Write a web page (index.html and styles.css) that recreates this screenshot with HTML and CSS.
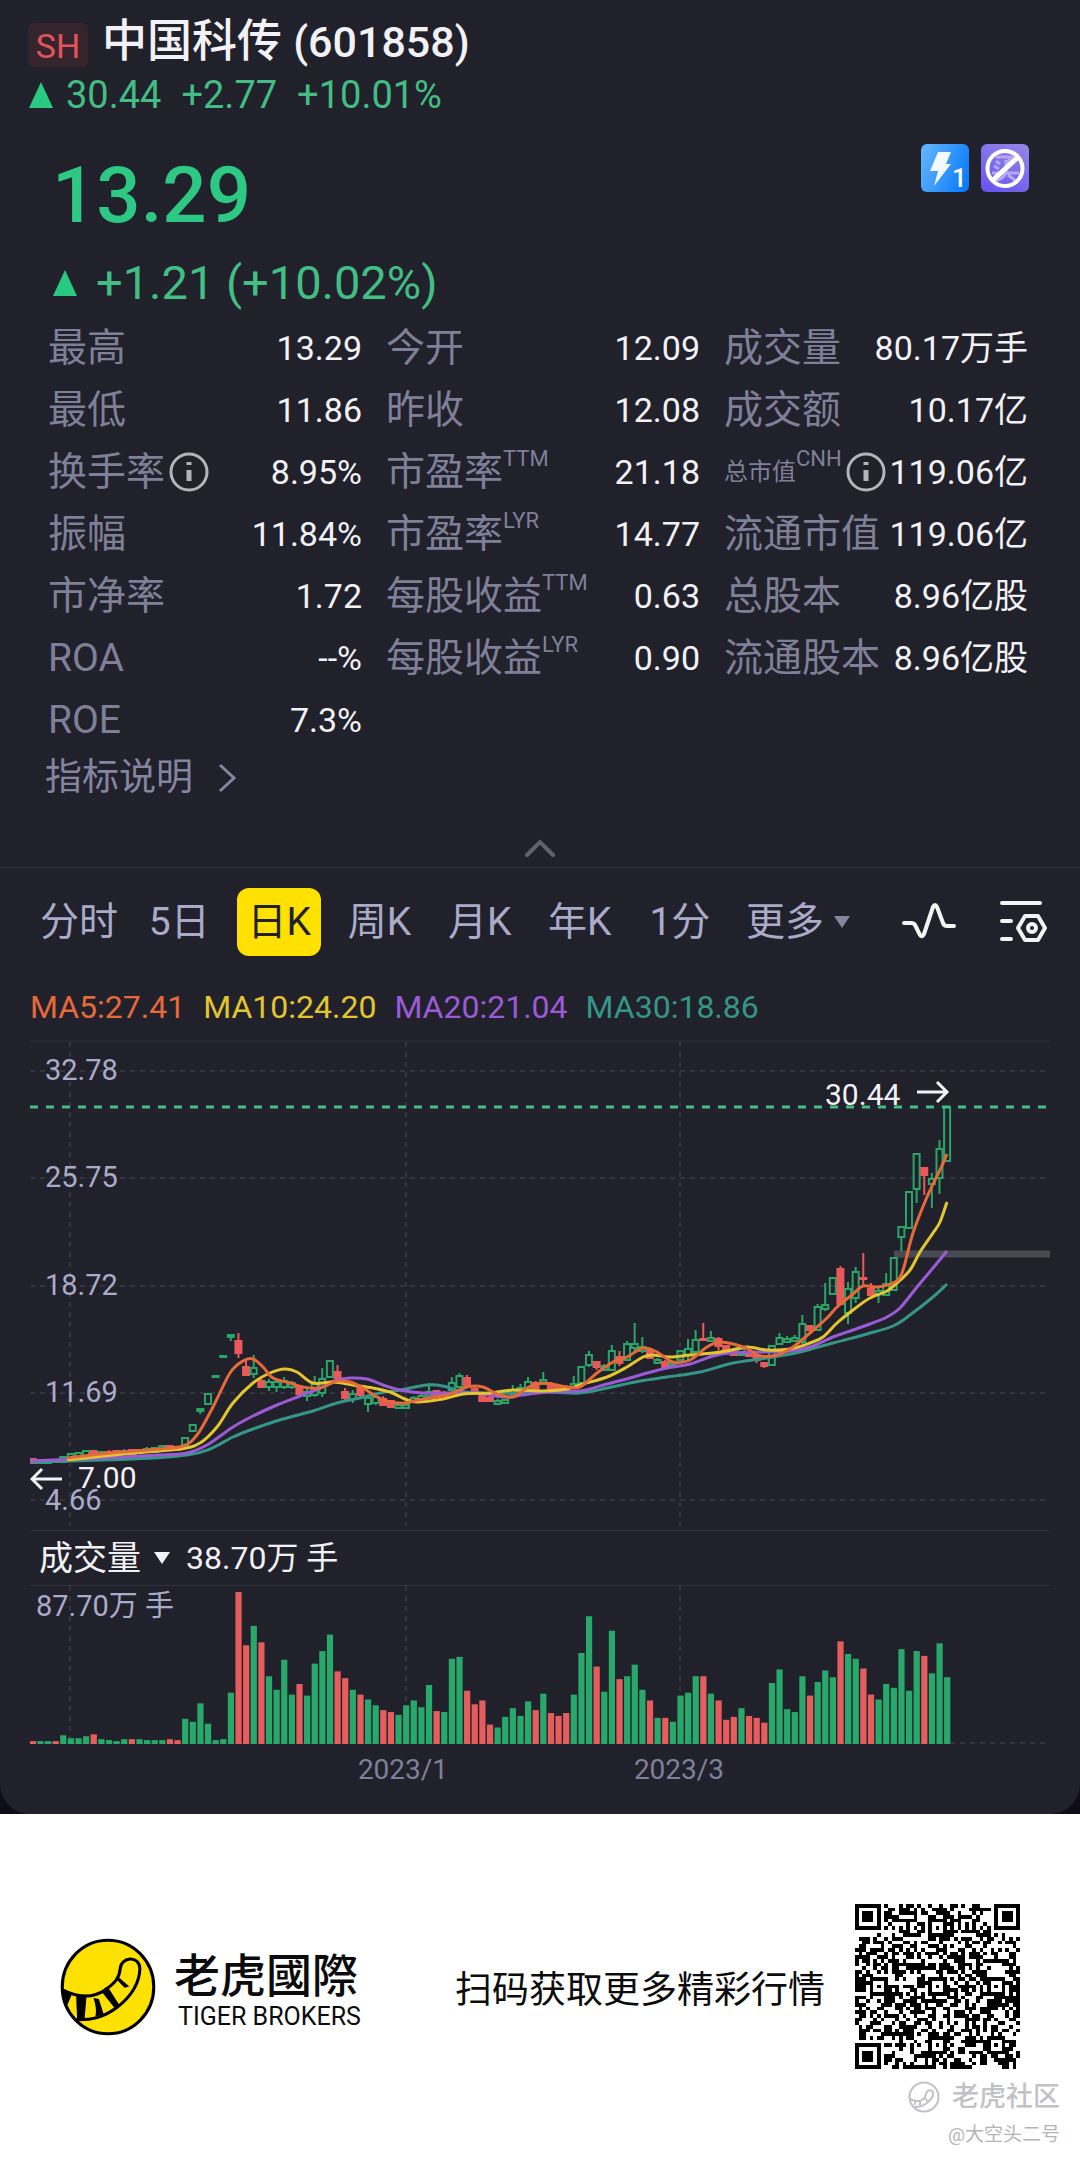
FILE: index.html
```
<!DOCTYPE html>
<html lang="zh-CN">
<head>
    <meta charset="UTF-8">
    <meta name="viewport" content="width=device-width, initial-scale=1.0">
    <title>中国科传 (601858)</title>
    <link rel="stylesheet" href="styles.css">
</head>
<body>
<div class="backdrop">
<main class="panel">
    <header class="header">
        <div class="title-row">
            <span class="market">SH</span>
            <h1 class="title">中国科传 <span class="code">(601858)</span></h1>
        </div>
        <div class="last">
            <svg class="up" viewBox="0 0 26 28"><path d="M13 1L25 27H1z"/></svg>
            <span>30.44</span>
            <span>+2.77</span>
            <span>+10.01%</span>
        </div>
    </header>

    <section class="quote">
        <div>
            <div class="price">13.29</div>
            <div class="change">
                <svg class="up" viewBox="0 0 26 28"><path d="M13 1L25 27H1z"/></svg>
                <span>+1.21 (+10.02%)</span>
            </div>
        </div>
        <div class="tags">
            <svg class="tag" viewBox="0 0 48 48">
                <defs>
                    <linearGradient id="blue" x1="0" y1="0.3" x2="1" y2="0.7">
                        <stop offset="0" stop-color="#5fb2ff"/>
                        <stop offset="1" stop-color="#0a7cfa"/>
                    </linearGradient>
                    <linearGradient id="purple" x1="0.8" y1="0" x2="0.3" y2="1">
                        <stop offset="0" stop-color="#9483e6"/>
                        <stop offset="1" stop-color="#6a58ee"/>
                    </linearGradient>
                </defs>
                <rect width="48" height="48" rx="6" fill="url(#blue)"/>
                <path d="M17 8h13l-5 12h5L13 42l4-15H9z" fill="#f2f9ff"/>
                <text x="31" y="43" font-size="26" font-weight="500" fill="#fff">1</text>
            </svg>
            <svg class="tag" viewBox="0 0 48 48">
                <rect width="48" height="48" rx="6" fill="url(#purple)"/>
                <g stroke="#b3a8f2" stroke-width="3" fill="none">
                    <path d="M15 13h18M30 13l-4 6M15 17l4 3M13 22l5 3M11 29h27M25 16v13q-3 6-11 8M27 31l8 6"/>
                </g>
                <circle cx="24" cy="24.500" r="17.500" fill="none" stroke="#fff" stroke-width="4"/>
                <path d="M12 36L37 13" stroke="#fff" stroke-width="5"/>
            </svg>
        </div>
    </section>

    <section class="stats">
        <dl class="col">
            <div class="row"><dt>最高</dt><dd>13.29</dd></div>
            <div class="row"><dt>最低</dt><dd>11.86</dd></div>
            <div class="row"><dt>换手率<svg class="info" viewBox="0 0 40 40"><circle cx="20" cy="20" r="18"/><path d="M20 18v11M20 10v3"/></svg></dt><dd>8.95%</dd></div>
            <div class="row"><dt>振幅</dt><dd>11.84%</dd></div>
            <div class="row"><dt>市净率</dt><dd>1.72</dd></div>
            <div class="row"><dt>ROA</dt><dd>--%</dd></div>
            <div class="row"><dt>ROE</dt><dd>7.3%</dd></div>
        </dl>
        <dl class="col">
            <div class="row"><dt>今开</dt><dd>12.09</dd></div>
            <div class="row"><dt>昨收</dt><dd>12.08</dd></div>
            <div class="row"><dt>市盈率<span class="sup">TTM</span></dt><dd>21.18</dd></div>
            <div class="row"><dt>市盈率<span class="sup">LYR</span></dt><dd>14.77</dd></div>
            <div class="row"><dt>每股收益<span class="sup">TTM</span></dt><dd>0.63</dd></div>
            <div class="row"><dt>每股收益<span class="sup">LYR</span></dt><dd>0.90</dd></div>
        </dl>
        <dl class="col">
            <div class="row"><dt>成交量</dt><dd>80.17万手</dd></div>
            <div class="row"><dt>成交额</dt><dd>10.17亿</dd></div>
            <div class="row"><dt><span class="small">总市值</span><span class="sup">CNH</span><svg class="info" viewBox="0 0 40 40"><circle cx="20" cy="20" r="18"/><path d="M20 18v11M20 10v3"/></svg></dt><dd>119.06亿</dd></div>
            <div class="row"><dt>流通市值</dt><dd>119.06亿</dd></div>
            <div class="row"><dt>总股本</dt><dd>8.96亿股</dd></div>
            <div class="row"><dt>流通股本</dt><dd>8.96亿股</dd></div>
        </dl>
    </section>

    <a class="note" href="#">指标说明
        <svg viewBox="0 0 20 30"><path d="M2 2l14 13L2 28"/></svg>
    </a>
    <button class="collapse" type="button" aria-label="收起">
        <svg viewBox="0 0 30 18"><path d="M2 16L15 3l13 13"/></svg>
    </button>

    <nav class="toolbar">
        <div class="tabs">
            <button type="button" class="tab">分时</button>
            <button type="button" class="tab">5日</button>
            <button type="button" class="tab active">日K</button>
            <button type="button" class="tab">周K</button>
            <button type="button" class="tab">月K</button>
            <button type="button" class="tab">年K</button>
            <button type="button" class="tab">1分</button>
        </div>
        <button type="button" class="more">更多
            <svg viewBox="0 0 16 12"><path d="M0 0h16L8 12z"/></svg>
        </button>
        <button type="button" class="tool" aria-label="指标">
            <svg viewBox="0 0 54 48"><path d="M2 25h7q3 0 4 2l5 10q2 3 4-1L31 9q2-4 4 0l6 16q1 3 4 3h7"/></svg>
        </button>
        <button type="button" class="tool" aria-label="设置">
            <svg viewBox="0 0 54 48"><path d="M4 5h38M4 23h9M4 41h9M27 18h13l7 12-7 12H27l-7-12z"/><circle cx="34" cy="30" r="4"/></svg>
        </button>
    </nav>

    <ul class="legend">
        <li class="ma5">MA5:27.41</li>
        <li class="ma10">MA10:24.20</li>
        <li class="ma20">MA20:21.04</li>
        <li class="ma30">MA30:18.86</li>
    </ul>

    <section class="charts">
        <svg class="chart" viewBox="0 0 1020 490">
            <path class="edge" d="M0 1h1020"/>
            <path class="grid" d="M0 31h1020M0 138h1020M0 246h1020M0 353h1020M0 460h1020M40 2v484M376 2v484M650 2v484"/>
            <g class="axis">
                <text x="15" y="40">32.78</text>
                <text x="15" y="147">25.75</text>
                <text x="15" y="255">18.72</text>
                <text x="15" y="362">11.69</text>
                <text x="15" y="470">4.66</text>
            </g>
            <path class="level" d="M864 214h156"/>
            <g id="candles"></g>
            <g id="averages"></g>
            <g class="mark">
                <text x="48" y="448">7.00</text>
                <path d="M2 439h30M12 429l-10 10 10 10"/>
                <text x="795" y="65">30.44</text>
                <path d="M887 52h30M907 42l10 10-10 10"/>
            </g>
            <path class="current" d="M0 67h1017"/>
        </svg>
        <div class="volume-head">
            <button type="button" class="volume-name">成交量
                <svg viewBox="0 0 16 12"><path d="M0 0h16L8 12z"/></svg>
            </button>
            <span>38.70万 手</span>
        </div>
        <svg class="chart" viewBox="0 0 1020 228">
            <path class="grid" d="M40 0v157M376 0v157M650 0v157M0 157h1017"/>
            <text class="axis" x="6" y="30">87.70万 手</text>
            <g id="volumes"></g>
            <text class="date" x="373" y="193">2023/1</text>
            <text class="date" x="649" y="193">2023/3</text>
        </svg>
    </section>
</main>
</div>

<footer class="footer">
    <div class="promo">
        <svg class="logo" viewBox="172 175 282 289">
            <ellipse cx="313" cy="319.500" rx="135" ry="138" fill="#fde100" stroke="#000" stroke-width="9"/>
            <path d="M177 327C225 351 270 352 304 328C334 308 347 292 349 265C352 230 405 225 407 265C406 310 377 350 342 378C300 410 264 418 215 416" fill="none" stroke="#000" stroke-width="9"/>
            <path d="M178 326l28 16-15 36q-12-20-13-52zM219 342h31l-6 71-22 3zM270 352l16 3 14 44-24 8q5-25-6-55zM296 336l20-11 31 48-14 9zM334 293l14 1 28 24-14 4z" fill="#000"/>
        </svg>
        <div class="brand">
            <div class="brand-name">老虎國際</div>
            <div class="brand-en">TIGER BROKERS</div>
        </div>
        <p class="scan">扫码获取更多精彩行情</p>
        <svg class="qr" viewBox="0 0 45 45" shape-rendering="crispEdges"><path id="qr"/></svg>
    </div>
    <div class="community">
        <svg viewBox="0 0 32 32"><circle cx="16" cy="16" r="14.500"/><path d="M2 18q10 5 15-2 2-9 7-6 4 4-5 12-5 4-12 4M7 20v4M12 20v4M17 17l3 4"/></svg>
        <span>老虎社区</span>
    </div>
    <div class="author">@大空头二号</div>
</footer>

<script src="chart.js"></script>
</body>
</html>
```
FILE: styles.css
```
* {
    box-sizing: border-box;
}
body {
    margin: 0;
    background-color: #fff;
    font-family: Roboto, "Noto Sans CJK SC", sans-serif;
}
h1, p, dl, dd, ul {
    margin: 0;
    padding: 0;
}
button {
    padding: 0;
    border: 0;
    background: none;
    color: inherit;
    font: inherit;
    white-space: nowrap;
}
svg {
    flex-shrink: 0;
}

.backdrop {
    background-color: #0d0c17;
}
.panel {
    padding-top: 16px;
    border-radius: 0 0 30px 30px;
    background-color: #21212b;
    color: #f2f2f6;
}

/* title and prices */
.header {
    padding: 0 28px;
}
.title-row {
    display: flex;
    align-items: center;
    gap: 14px;
    height: 52px;
}
.market {
    width: 60px;
    height: 44px;
    margin-top: 6px;
    border-radius: 6px;
    background-color: #35242c;
    color: #e2545c;
    font-size: 34px;
    line-height: 46px;
    text-align: center;
}
.title {
    font-size: 45px;
    font-weight: 500;
    line-height: 52px;
}
.code {
    font-size: 43px;
}
.last {
    display: flex;
    align-items: center;
    gap: 20px;
    height: 54px;
    color: #42bd83;
    font-size: 38px;
}
.up {
    width: 26px;
    height: 28px;
    fill: #2ac982;
}
.last .up {
    margin-right: -8px;
}
.quote {
    display: flex;
    justify-content: space-between;
    padding: 22px 51px 0 52px;
}
.price {
    color: #2dc884;
    font-size: 78px;
    font-weight: 500;
    line-height: 104px;
}
.change {
    display: flex;
    align-items: center;
    gap: 18px;
    height: 69px;
    color: #42bd83;
    font-size: 47px;
}
.tags {
    display: flex;
    gap: 12px;
}
.tag {
    width: 48px;
    height: 48px;
}

/* figures */
.stats {
    display: grid;
    grid-template-columns: 314fr 314fr 304fr;
    gap: 24px;
    padding: 0 52px 0 48px;
}
.row {
    display: flex;
    align-items: center;
    justify-content: space-between;
    height: 62px;
    white-space: nowrap;
}
dt {
    display: flex;
    align-items: center;
    color: #7f8098;
    font-size: 39px;
    line-height: 48px;
}
dd {
    font-size: 34px;
    line-height: 48px;
}
.sup {
    align-self: flex-start;
    font-size: 22px;
    line-height: 22px;
}
.small {
    font-size: 24px;
}
.info {
    width: 40px;
    height: 40px;
    margin-left: 4px;
    fill: none;
    stroke: #b4b4bc;
    stroke-width: 3;
}
.info path {
    stroke-width: 5;
}
.note {
    display: flex;
    align-items: center;
    gap: 25px;
    height: 54px;
    padding-left: 45px;
    color: #8485a0;
    font-size: 37px;
    line-height: 48px;
    text-decoration: none;
}
.note svg {
    width: 20px;
    height: 30px;
    fill: none;
    stroke: #8485a0;
    stroke-width: 3;
}
.collapse {
    display: block;
    width: 100%;
    height: 63px;
    padding-top: 28px;
    border-bottom: 1px solid #31313c;
    line-height: 18px;
}
.collapse svg {
    width: 30px;
    height: 18px;
    fill: none;
    stroke: #62626e;
    stroke-width: 4;
    stroke-linecap: round;
}

/* period tabs */
.toolbar {
    display: flex;
    align-items: center;
    height: 108px;
    padding: 0 28px 0 37px;
    color: #a9abc9;
    font-size: 39px;
    line-height: 64px;
}
.tabs {
    display: grid;
    grid-template-columns: repeat(7, 1fr);
    gap: 16px;
    flex: 1;
}
.tab {
    height: 68px;
    border-radius: 12px;
}
.tab.active {
    background-color: #ffe100;
    color: #21212b;
}
.more {
    display: flex;
    align-items: center;
    gap: 10px;
    margin-left: 24px;
}
.more svg, .volume-name svg {
    width: 16px;
    height: 12px;
    fill: #8485a0;
}
.tool {
    width: 54px;
    height: 48px;
    margin-left: 52px;
}
.tool + .tool {
    margin-left: 42px;
}
.tool svg {
    display: block;
    fill: none;
    stroke: #f4f4f4;
    stroke-width: 4;
    stroke-linecap: round;
    stroke-linejoin: round;
}

/* charts */
.legend {
    display: flex;
    gap: 18px;
    height: 64px;
    padding: 0 30px;
    font-size: 32px;
    line-height: 62px;
    list-style: none;
}
.ma5 { color: #e6693a; }
.ma10 { color: #e3c530; }
.ma20 { color: #9c5bd6; }
.ma30 { color: #359688; }

.charts {
    padding: 0 30px;
}
.chart {
    display: block;
    width: 100%;
}
.edge {
    stroke: #31313c;
    stroke-width: 1;
}
.grid {
    fill: none;
    stroke: #34343e;
    stroke-width: 2;
    stroke-dasharray: 5 5;
}
.axis {
    fill: #a9abc9;
    font-size: 29px;
}
.date {
    fill: #7f8098;
    font-size: 28px;
    text-anchor: middle;
}
.level {
    stroke: #4a4a53;
    stroke-width: 7;
}
.current {
    stroke: #42bd83;
    stroke-width: 3;
    stroke-dasharray: 8 8;
}
.mark text {
    fill: #f2f2f6;
    font-size: 30px;
}
.mark path {
    fill: none;
    stroke: #f2f2f6;
    stroke-width: 3;
}
.average {
    fill: none;
    stroke: currentColor;
    stroke-width: 3;
}
.rise {
    fill: none;
    stroke: #2aa568;
    stroke-width: 2;
}
.fall {
    fill: #e85a5a;
    stroke: #e85a5a;
    stroke-width: 2;
}
.bar-rise {
    fill: #28a86b;
}
.bar-fall {
    fill: #e55d5d;
}
.volume-head {
    display: flex;
    align-items: center;
    gap: 16px;
    height: 56px;
    padding-left: 9px;
    border-top: 1px solid #31313c;
    border-bottom: 1px solid #31313c;
    font-size: 32px;
    line-height: 52px;
}
.volume-name {
    display: flex;
    align-items: center;
    gap: 13px;
    font-size: 34px;
}
.volume-name svg {
    fill: #f2f2f6;
}

/* footer */
.footer {
    padding: 90px 20px 4px 60px;
    color: #0c0c0c;
}
.promo {
    display: flex;
    align-items: center;
    padding-right: 40px;
}
.logo {
    width: 96px;
    height: 98px;
}
.brand {
    margin-left: 18px;
}
.brand-name {
    font-family: "Noto Sans CJK TC", sans-serif;
    font-size: 46px;
    font-weight: 500;
    line-height: 60px;
}
.brand-en {
    padding-left: 4px;
    font-size: 25px;
    line-height: 30px;
}
.scan {
    margin-left: auto;
    font-size: 37px;
    white-space: nowrap;
}
.qr {
    width: 165px;
    height: 165px;
    margin-left: 30px;
}
.community {
    display: flex;
    align-items: center;
    justify-content: flex-end;
    gap: 12px;
    margin-top: 8px;
    color: #c2c2c6;
    font-size: 27px;
    font-weight: 500;
    line-height: 40px;
}
.community svg {
    width: 32px;
    height: 32px;
    fill: none;
    stroke: #c2c2c6;
    stroke-width: 2;
}
.author {
    color: #b4b4b8;
    font-size: 19px;
    line-height: 36px;
    text-align: right;
}
```
FILE: chart.js
```
"use strict";

const SVG = "http://www.w3.org/2000/svg";
const FIRST = 2.7;
const STEP = 7.62;

// direction, high, top of body, bottom of body, low
const candles = [
    "d 418 419 423 424", "u 419 420 423 424", "u 419 420 423 424", "d 419 420 422 423", "u 416 417 422 423",
    "u 413 414 420 421", "u 412 413 418 420", "u 410 411 416 417", "d 410 411 416 417", "u 411 412 416 417",
    "d 410 412 416 417", "d 410 411 415 416", "u 409 411 414 415", "d 409 410 414 415", "u 409 410 413 414",
    "u 407 409 412 413", "u 407 408 412 413", "u 405 406 410 411", "d 405 406 410 411", "d 406 407 410 411",
    "u 397 398 405 405", "u 384 385 391 391", "u 369 369 371 374", "u 353 354 364 364", "u 336 336 337 337",
    "u 316 316 317 317", "u 294 295 297 301", "d 293 301 313 318", "d 320 327 335 335", "u 315 328 334 338",
    "d 339 341 347 348", "u 339 342 347 351", "u 339 342 347 352", "u 337 341 347 349", "u 341 343 347 349",
    "d 345 347 354 355", "u 349 352 356 361", "u 336 344 355 357", "u 328 339 353 357", "u 320 321 337 337",
    "d 325 332 338 340", "d 348 352 358 361", "u 350 354 359 363", "d 345 348 355 357", "u 355 358 364 372",
    "u 354 357 363 365", "d 356 359 365 366", "d 360 361 367 368", "u 363 365 368 368", "u 364 365 368 368",
    "u 356 358 361 362", "u 354 356 359 360", "u 343 352 356 359", "d 350 351 356 357", "d 351 353 356 357",
    "u 337 343 350 353", "u 333 336 347 348", "d 335 338 345 347", "d 347 349 352 353", "d 353 355 361 362",
    "d 356 358 361 362", "u 359 361 364 365", "u 359 360 363 364", "u 345 350 354 355", "u 344 348 353 354",
    "u 337 342 350 351", "d 341 343 350 352", "u 332 340 344 345", "d 342 344 349 350", "d 344 346 349 350",
    "d 345 347 350 351", "u 336 344 348 349", "u 326 327 343 343", "u 311 315 325 327", "d 321 322 327 330",
    "u 324 326 330 331", "u 305 311 330 330", "d 311 317 323 326", "u 301 304 320 320", "u 283 304 308 311",
    "u 297 307 311 313", "d 308 310 318 319", "u 318 320 323 324", "d 320 322 327 328", "u 322 323 325 326",
    "u 310 311 320 320", "u 299 309 315 320", "u 290 300 312 313", "d 283 299 300 300", "u 291 298 301 302",
    "d 297 299 306 310", "d 305 306 311 312", "d 309 310 315 315", "u 307 309 315 316", "d 310 312 316 317",
    "d 314 315 320 323", "d 322 323 326 328", "u 305 306 325 325", "u 293 298 304 304", "u 296 299 302 303",
    "u 295 298 301 302", "u 275 284 302 304", "d 285 286 290 293", "u 264 267 290 290", "u 243 265 269 271",
    "u 237 238 254 254", "d 226 229 264 265", "u 242 249 273 284", "u 227 232 258 263", "d 213 238 239 247",
    "d 243 249 255 256", "u 248 251 254 263", "u 233 244 255 255", "u 217 218 250 250", "u 186 187 197 211",
    "u 152 152 188 188", "u 114 114 149 163", "d 127 128 135 155", "u 133 139 144 168", "u 100 109 138 154",
    "u 66 67 121 121"
];

// daily volume, a minus sign marks a falling day
const VOLUME_TOP = 157;
const BAR_HEIGHT = 152;
const volumes = [
    -3, 3, 3, -3, 9, 6, 6, 8, -10, 5, 4, 3, 5, -5, 5, 4, 4, 4, -5, -4,
    26, 23, 42, 21, 4, 5, 53, -157, -102, 122, -105, 70, 56, 87, 51, -62, 50, 83, 96, 113,
    -75, -68, 56, -51, 46, 40, -35, -33, 30, 40, 45, 38, 61, -34, 33, 88, 90, -55, -41, -45,
    -20, 17, 28, 37, 29, 44, -35, 52, -32, -29, -32, 51, 94, 132, -80, 54, 117, -67, 70, 82,
    56, -45, 27, -27, 23, 50, 53, 70, -70, 52, -45, -25, -28, 37, -29, -27, -22, 63, 77, 36,
    33, 70, -50, 64, 76, 69, -106, 93, 88, -78, -51, 46, 62, 58, 98, 55, 96, -91, 73, 104,
    69
];

const averages = {
    ma30: "0,422 103,419 157,415 180,409 203,397 223,389 253,379 283,371 307,363 330,358 350,353 370,350 397,345 413,346 430,351 450,353 483,353 517,352 550,353 577,348 610,341 637,337 670,332 703,323 737,318 770,312 803,303 837,294 863,286 880,275 903,257 917,244",
    ma20: "0,421 70,418 130,415 157,413 177,405 203,387 223,376 247,365 270,356 290,348 307,340 320,338 337,339 353,345 370,350 393,353 423,353 447,353 473,357 493,355 517,352 550,351 577,344 600,338 617,333 637,328 660,324 683,316 700,313 730,312 760,311 780,307 803,297 823,290 840,284 857,277 870,268 887,247 903,228 917,211",
    ma10: "37,420 103,413 150,409 170,403 187,387 203,363 223,343 240,333 255,329 267,332 283,343 303,342 323,345 343,348 360,352 375,359 387,362 413,359 433,354 460,353 483,350 513,351 537,349 553,344 577,337 597,327 613,317 623,315 640,317 660,315 683,313 697,311 717,307 737,310 760,309 780,303 793,297 807,283 823,270 840,258 857,251 867,243 880,230 890,212 903,193 910,182 917,162",
    ma5: "37,418 80,413 130,409 153,406 167,395 183,367 200,333 213,321 223,319 233,327 243,338 260,343 273,347 290,348 307,341 320,342 333,348 347,357 360,362 375,363 388,360 417,355 437,347 453,347 467,354 483,357 497,348 513,343 537,347 550,347 567,333 583,322 597,317 613,308 627,312 643,322 660,320 677,307 690,302 707,305 720,310 730,316 747,315 763,307 780,293 797,278 807,267 823,254 833,246 847,247 863,243 872,233 883,193 897,157 910,130 917,114"
};

function draw(parent, name, attributes) {
    const node = document.createElementNS(SVG, name);
    Object.keys(attributes).forEach( key => node.setAttribute(key, attributes[key]));
    document.getElementById(parent).appendChild(node);
}

// smooth curve through all the points
function curve(text) {
    const p = text.split(" ").map( pair => pair.split(",").map(Number));
    let d = "M" + p[0];
    for (let i = 0; i < p.length - 1; i++) {
        const a = p[i - 1] || p[i];
        const b = p[i];
        const c = p[i + 1];
        const e = p[i + 2] || c;
        d += "C" + [
            b[0] + (c[0] - a[0]) / 6, b[1] + (c[1] - a[1]) / 6,
            c[0] - (e[0] - b[0]) / 6, c[1] - (e[1] - b[1]) / 6,
            c[0], c[1]
        ];
    }
    return d;
}

candles.forEach((line, i) => {
    const [direction, ...values] = line.split(" ");
    const [high, top, bottom, low] = values.map(Number);
    const x = FIRST + i * STEP;
    const left = Math.max(x - 3, 1);
    draw("candles", "path", {
        class: direction === "u" ? "rise" : "fall",
        d: `M${x} ${high}V${top}M${x} ${bottom}V${low}M${left} ${top}H${x + 3}V${bottom}H${left}z`
    });
});

Object.keys(averages).forEach( name => {
    draw("averages", "path", {class: "average " + name, d: curve(averages[name])});
});

volumes.forEach((value, i) => {
    const height = Math.abs(value) / VOLUME_TOP * BAR_HEIGHT;
    draw("volumes", "rect", {
        class: value > 0 ? "bar-rise" : "bar-fall",
        x: Math.max(FIRST + i * STEP - 3, 0),
        y: 158 - height,
        width: 6.2,
        height: height
    });
});

// QR code: version 7, 45 modules a side
const SIZE = 45;
const centres = [[6, 22], [22, 6], [22, 22], [22, 38], [38, 22], [38, 38]];
const corners = [[3, 3], [41, 3], [3, 41]];
let seed = 601858;

function ring(x, y, list) {
    const found = list.map( c => Math.max(Math.abs(x - c[0]), Math.abs(y - c[1])));
    return Math.min(...found);
}
function random() {
    seed = (seed * 1103515245 + 12345) % 2147483648;
    return seed / 2147483648;
}
function isDark(x, y) {
    const noise = random() < 0.52;
    const corner = ring(x, y, corners);
    if (corner <= 4) {return corner !== 2 && corner !== 4}
    const centre = ring(x, y, centres);
    if (centre <= 2) {return centre !== 1}
    if (x === 6 || y === 6) {return (x + y) % 2 === 0}
    return noise;
}

let modules = "";
for (let y = 0; y < SIZE; y++) {
    for (let x = 0; x < SIZE; x++) {
        if (isDark(x, y)) {modules += `M${x} ${y}h1v1h-1z`}
    }
}
document.getElementById("qr").setAttribute("d", modules);
```
